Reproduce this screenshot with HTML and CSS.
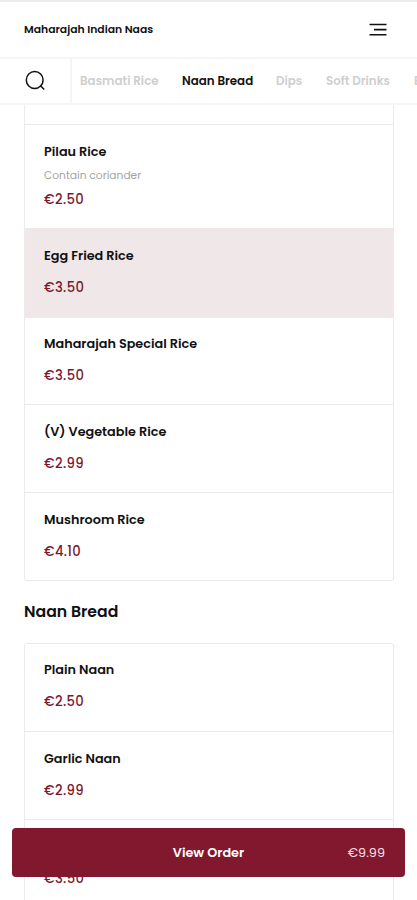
FILE: index.html
```html
<!DOCTYPE html>
<html lang="en">
<head>
<meta charset="utf-8">
<meta name="viewport" content="width=device-width, initial-scale=1">
<title>Maharajah Indian Naas</title>
<link rel="stylesheet" href="styles.css">
</head>
<body>
<div class="app">
  <header class="header">
    <div class="brand">Maharajah Indian Naas</div>
    <svg class="menu-icon" width="18" height="14" viewBox="0 0 18 14"><path d="M0.5 1.5H17.5M5 6.6H17.5M0.5 11.8H17.5" stroke="#111" stroke-width="1.6"/></svg>
  </header>
  <nav class="nav">
    <div class="search"><svg width="22" height="22" viewBox="0 0 22 22" fill="none" stroke="#111" stroke-width="1.5"><circle cx="9.7" cy="10" r="8.4"/><path d="M15.2 15.5L19.2 19.6"/></svg></div>
    <div class="tabs">
      <span class="tab tab-rice">Basmati Rice</span>
      <span class="tab tab-naan active">Naan Bread</span>
      <span class="tab tab-dips">Dips</span>
      <span class="tab tab-drinks">Soft Drinks</span>
      <span class="tab">Beers</span>
    </div>
  </nav>
  <main class="content">
    <section class="card card-continued">
      <div class="previous"></div>
      <article class="item described"><h3 class="name">Pilau Rice</h3><p class="note">Contain coriander</p><p class="price">€2.50</p></article>
      <article class="item selected"><h3 class="name">Egg Fried Rice</h3><p class="price">€3.50</p></article>
      <article class="item after-selected"><h3 class="name">Maharajah Special Rice</h3><p class="price">€3.50</p></article>
      <article class="item"><h3 class="name">(V) Vegetable Rice</h3><p class="price">€2.99</p></article>
      <article class="item"><h3 class="name">Mushroom Rice</h3><p class="price">€4.10</p></article>
    </section>
    <h2 class="heading">Naan Bread</h2>
    <section class="card">
      <article class="item"><h3 class="name">Plain Naan</h3><p class="price">€2.50</p></article>
      <article class="item"><h3 class="name">Garlic Naan</h3><p class="price">€2.99</p></article>
      <article class="item"><h3 class="name">Peshwari Naan</h3><p class="price">€3.50</p></article>
    </section>
  </main>
  <div class="order"><span></span><strong class="order-label">View Order</strong><span class="order-total">€9.99</span></div>
</div>
</body>
</html>
```
FILE: styles.css
```css
* { box-sizing: border-box; }
body { margin: 0; background: #fff; color: #111; font-family: Poppins, Inter, "Liberation Sans", sans-serif; }
h2, h3, p { margin: 0; }
.app { position: relative; height: 900px; overflow: hidden; display: flex; flex-direction: column; }
.header { height: 59px; flex: none; display: flex; align-items: center; justify-content: space-between; padding: 0 30px 0 24px; border-top: 2px solid #ececec; border-bottom: 2px solid #f5f5f5; }
.brand { font-size: 10.8px; font-weight: 600; white-space: nowrap; }
.menu-icon { display: block; }
.nav { height: 46px; flex: none; display: flex; border-bottom: 2px solid #f5f5f5; }
.search { width: 72px; flex: none; padding: 11px 0 0 25px; border-right: 2px solid #f5f5f5; }
.search svg { display: block; }
.tabs { flex: 1; min-width: 0; overflow: hidden; display: flex; align-items: center; gap: 23px; padding-left: 8px; white-space: nowrap; }
.tab { flex: none; font-size: 11.85px; font-weight: 600; color: #cfcfcf; }
.active { color: #111; }
.tab-rice { width: 79px; }
.tab-naan { width: 71px; }
.tab-dips { width: 27px; }
.tab-drinks { width: 65px; }
.content { flex: none; padding: 0 23px 0 24px; }
.card { border: 1px solid #ebebeb; border-radius: 3px; }
.card-continued { border-top: 0; border-radius: 0 0 3px 3px; }
.previous { height: 19px; }
.item { height: 88px; padding: 17px 20px 0 19px; border-top: 1px solid #ebebeb; }
.card:not(.card-continued) .item:first-child { border-top: 0; height: 87px; padding-top: 16px; }
.described { height: 104px; }
.selected { height: 89px; background: #f0e7e8; border-color: #f0e7e8; }
.after-selected { height: 87px; }
.name { font-size: 12.8px; line-height: 20px; font-weight: 600; }
.note { font-size: 10.7px; line-height: 16px; margin-top: 6px; color: #a3a3a3; }
.price { font-size: 13.2px; line-height: 20px; margin-top: 12px; font-weight: 500; letter-spacing: 0.35px; color: #7d182b; }
.after-selected .name { margin-top: -1px; }
.described .price { margin-top: 6px; }
.heading { height: 62px; font-size: 15.7px; line-height: 61px; font-weight: 600; }
.order { position: absolute; left: 12px; right: 12px; top: 828px; height: 49px; display: grid; grid-template-columns: 1fr auto 1fr; align-items: center; padding: 0 20px; border-radius: 4px; background: #81182d; color: #fff; font-size: 12.8px; }
.order-label { font-weight: 600; }
.order-total { text-align: right; color: #f1dfe2; }
```
